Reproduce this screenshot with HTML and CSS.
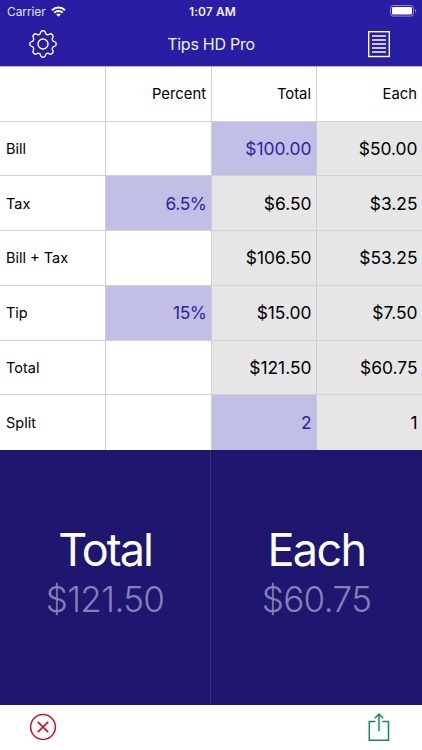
FILE: index.html
```html
<!DOCTYPE html>
<html lang="en">
<head>
<meta charset="utf-8">
<title>Tips HD Pro</title>
<link rel="stylesheet" href="styles.css">
</head>
<body>
<div class="app">
  <header class="top">
    <div class="status">
      <div class="carrier"><span>Carrier</span>
        <svg width="15" height="11" viewBox="0 0 15 11" fill="none" stroke="#fff" stroke-width="2"><path d="M1 4.2a9.2 9.2 0 0 1 13 0M3.3 6.8a6 6 0 0 1 8.4 0"/><path d="M7.5 10.7 5.3 8.5a3.1 3.1 0 0 1 4.4 0z" fill="#fff" stroke="none"/></svg>
      </div>
      <div class="time">1:07 AM</div>
      <svg class="battery" width="27" height="12" viewBox="0 0 27 12"><rect x=".5" y=".5" width="23" height="10.6" rx="2.6" fill="none" stroke="#8f89cf"/><rect x="2" y="2" width="20" height="7.6" rx="1.3" fill="#fff"/><path d="M25 4v3.6q1.3-.5 1.3-1.8T25 4z" fill="#8f89cf"/></svg>
    </div>
    <div class="nav">
      <svg width="30" height="30" viewBox="-15 -15 30 30" fill="none" stroke="#fff" stroke-width="1.4">
        <defs><path id="tooth" d="M-3.9-9.42C-2.8-9.9-2.5-10.5-2.4-11.4C-2.2-12.8-1.5-13.2 0-13.2S2.2-12.8 2.4-11.4C2.5-10.5 2.8-9.9 3.9-9.42"/></defs>
        <use href="#tooth"/><use href="#tooth" transform="rotate(45)"/><use href="#tooth" transform="rotate(90)"/><use href="#tooth" transform="rotate(135)"/><use href="#tooth" transform="rotate(180)"/><use href="#tooth" transform="rotate(225)"/><use href="#tooth" transform="rotate(270)"/><use href="#tooth" transform="rotate(315)"/>
        <circle r="5"/>
      </svg>
      <h1>Tips HD Pro</h1>
      <svg width="30" height="30" viewBox="0 0 30 30" fill="none" stroke="#fff"><rect x="4.7" y="2.7" width="20.6" height="24.8" stroke-width="1.4"/><path d="M8 7h14M8 11h14M8 15h14M8 19h14M8 23h14" stroke-width="1.7"/></svg>
    </div>
  </header>
  <main class="sheet">
    <div></div><div class="head">Percent</div><div class="head">Total</div><div class="head">Each</div>
    <div class="label">Bill</div><div></div><div class="input">$100.00</div><div class="calc">$50.00</div>
    <div class="label">Tax</div><div class="input percent">6.5%</div><div class="calc">$6.50</div><div class="calc">$3.25</div>
    <div class="label">Bill + Tax</div><div></div><div class="calc">$106.50</div><div class="calc">$53.25</div>
    <div class="label">Tip</div><div class="input percent">15%</div><div class="calc">$15.00</div><div class="calc">$7.50</div>
    <div class="label">Total</div><div></div><div class="calc">$121.50</div><div class="calc">$60.75</div>
    <div class="label">Split</div><div></div><div class="input">2</div><div class="calc">1</div>
  </main>
  <section class="summary">
    <div class="panel"><div class="name">Total</div><div class="amount">$121.50</div></div>
    <div class="panel"><div class="name each">Each</div><div class="amount">$60.75</div></div>
  </section>
  <footer class="tools">
    <svg width="30" height="30" viewBox="0 0 30 30" fill="none" stroke="#c5132c" stroke-width="1.5"><circle cx="15" cy="15" r="12.4"/><path d="M9.8 9.8l10.4 10.4M20.2 9.8 9.8 20.2" stroke-width="1.7"/></svg>
    <svg width="30" height="30" viewBox="0 0 30 30" fill="none" stroke="#178a50" stroke-width="1.5"><path d="M11.5 9.6H5.3V28.3h19.2V9.6h-6.2M15 19V2M10.8 6.2 15 2l4.2 4.2"/></svg>
  </footer>
</div>
</body>
</html>
```
FILE: styles.css
```css
* { box-sizing: border-box; }
body { margin: 0; font-family: Inter, "Liberation Sans", sans-serif; color: #000; }
svg { display: block; flex: none; }
.app { width: 422px; height: 750px; display: flex; flex-direction: column; background: #fff; }
.top { height: 66px; background: #281da3; color: #fff; flex: none; }
.status { height: 22px; display: grid; grid-template-columns: 1fr auto 1fr; align-items: center; padding: 0 5px 0 7px; }
.carrier { display: flex; align-items: center; gap: 5px; font-size: 12px; letter-spacing: -.1px; color: #e4e2f5; }
.time { font-size: 12px; font-weight: 600; letter-spacing: .1px; color: #f1f0fb; padding-left: 1px; }
.battery { justify-self: end; }
.nav { height: 44px; display: flex; align-items: center; justify-content: space-between; padding: 0 28px; }
.nav h1 { margin: 0; font-size: 16px; font-weight: 400; letter-spacing: -.25px; color: #f1f0fb; }
.sheet { height: 384px; flex: none; display: grid; grid-template-columns: 106px 106px 105px 105px; grid-template-rows: repeat(7, 1fr); border-top: 1px solid #b6b3d5; }
.sheet > div { display: flex; align-items: center; justify-content: flex-end; padding-right: 5px; border-right: 1px solid #ceced2; border-bottom: 1px solid #d2d2d4; font-size: 17.4px; }
.sheet > div:nth-child(4n) { border-right: 0; }
.sheet > div:nth-last-child(-n+4) { border-bottom: 0; }
.sheet > .label { justify-content: flex-start; padding-left: 6px; font-size: 14.5px; }
.sheet > .head { font-size: 14.8px; }
.sheet > .input { background: #c2bfe7; color: #3022a2; padding-right: 4.5px; }
.sheet > .percent { letter-spacing: -.4px; }
.sheet > .calc { background: #e6e6e6; padding-right: 4.5px; }
.summary { height: 255px; flex: none; display: grid; grid-template-columns: 211px 211px; background: #1e166f; }
.panel { text-align: center; padding-top: 71px; }
.panel:first-child { border-right: 1px solid #352d82; }
.name { font-size: 45px; line-height: 58px; color: #fff; letter-spacing: -2px; }
.each { letter-spacing: -1.6px; }
.amount { font-size: 35px; line-height: 40px; font-weight: 300; color: #8580b5; letter-spacing: -.6px; }
.tools { flex: 1; display: flex; align-items: center; justify-content: space-between; padding: 0 28px 1px; }
```
